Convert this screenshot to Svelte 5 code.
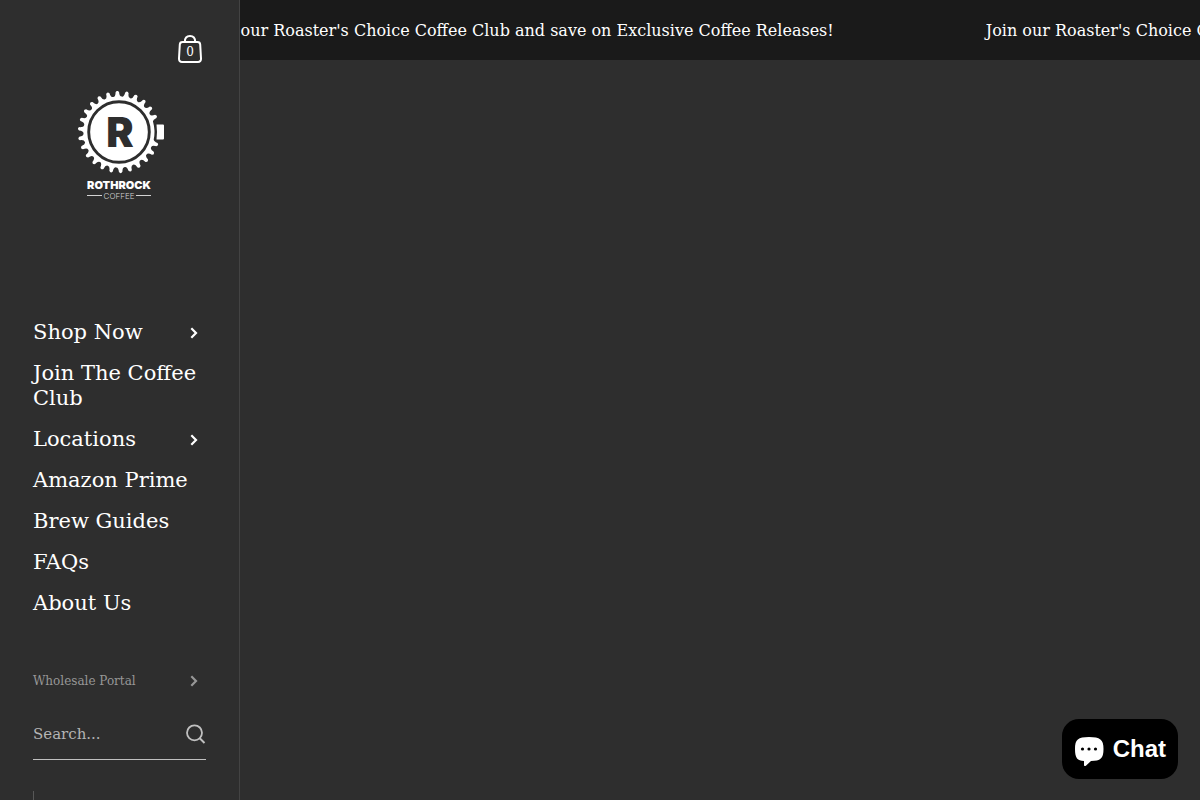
<script lang="ts">
  interface MenuItem {
    label: string;
    expandable?: boolean;
  }

  const announcement =
    "Join our Roaster's Choice Coffee Club and save on Exclusive Coffee Releases!";

  const menu: MenuItem[] = [
    { label: 'Shop Now', expandable: true },
    { label: 'Join The Coffee Club' },
    { label: 'Locations', expandable: true },
    { label: 'Amazon Prime' },
    { label: 'Brew Guides' },
    { label: 'FAQs' },
    { label: 'About Us' },
  ];

  let cartCount = $state(0);
  let query = $state('');
  let scrolled = $state(36);

  // sprocket outline, two teeth are left out for the mug handle
  const TEETH = 26;
  const STEP = 360 / TEETH;

  function point(radius: number, deg: number) {
    const rad = ((deg - 90) * Math.PI) / 180;
    return `${(42 + radius * Math.cos(rad)).toFixed(2)} ${(41 + radius * Math.sin(rad)).toFixed(2)}`;
  }

  function sprocket() {
    let d = `M${point(35.5, -2.4 - STEP / 2)}`;
    for (let i = 0; i < TEETH; i++) {
      const a = -2.4 + i * STEP;
      if (i === 6 || i === 7) {
        d += `A35.5 35.5 0 0 1 ${point(35.5, a + STEP / 2)}`;
        continue;
      }
      d += `Q${point(35.5, a - 3)} ${point(40, a - 2.5)}`;
      d += `Q${point(42.4, a)} ${point(40, a + 2.5)}`;
      d += `Q${point(35.5, a + 3)} ${point(35.5, a + STEP / 2)}`;
    }
    return d + 'Z';
  }
</script>

{#snippet chevron()}
  <svg class="chevron" viewBox="0 0 8 12" aria-hidden="true">
    <path d="M1.3 1.3 6 6 1.3 10.7" fill="none" stroke="currentColor" stroke-width="2.2" />
  </svg>
{/snippet}

<div class="page">
  <aside class="sidebar">
    <a class="cart" href="#cart" aria-label="Cart">
      <svg viewBox="0 0 24 28" aria-hidden="true">
        <g fill="none" stroke="currentColor" stroke-width="2">
          <path d="M4.5 7h15c1.6 0 2.6 1 2.7 2.5l.8 14c.1 2-1 3.5-3 3.5H4c-2 0-3.100-1.5-3-3.500l.8-14C1.900 8 2.900 7 4.500 7Z" />
          <path d="M6.800 7C6.800 3 8.500 1 12 1s5.200 2 5.200 6" />
        </g>
      </svg>
      <span class="cart-count">{cartCount}</span>
    </a>

    <a class="logo" href="#home" aria-label="Rothrock Coffee">
      <svg viewBox="0 0 88 110" aria-hidden="true">
        <path d={sprocket()} fill="#fff" />
        <circle cx="42" cy="41" r="30.3" fill="none" stroke="#2e2e2e" stroke-width="2.9" />
        <path d="M79.500 33.500h6.500q1 0 1 1v13q0 1-1 1h-6.500q1-7.500 0-15Z" fill="#fff" />
        <text class="logo-letter" x="43" y="56" text-anchor="middle">R</text>
        <text class="logo-name" x="42" y="98" text-anchor="middle">ROTHROCK</text>
        <text class="logo-sub" x="42" y="108" text-anchor="middle">COFFEE</text>
        <path d="M10 104.500h15M59 104.500h15" stroke="#fff" stroke-width="0.8" />
      </svg>
    </a>

    <nav class="menu" aria-label="Main">
      {#each menu as item}
        <a class="menu-link" href="#menu">
          <span>{item.label}</span>
          {#if item.expandable}
            {@render chevron()}
          {/if}
        </a>
      {/each}
    </nav>

    <a class="secondary-link" href="#wholesale">
      <span>Wholesale Portal</span>
      {@render chevron()}
    </a>

    <form class="search" role="search">
      <input type="search" aria-label="Search" placeholder="Search..." bind:value={query} />
      <button type="submit" aria-label="Submit search">
        <svg viewBox="0 0 20 20" aria-hidden="true">
          <circle cx="8.5" cy="8.8" r="7.500" fill="none" stroke="currentColor" stroke-width="1.8" />
          <path d="m13.500 14 5 5" stroke="currentColor" stroke-width="2" />
        </svg>
      </button>
    </form>

    <div class="social"></div>
  </aside>

  <main class="content">
    <div class="announcement">
      <div class="announcement-track" style="transform: translateX(-{scrolled}px);">
        <span>{announcement}</span>
        <span aria-hidden="true">{announcement}</span>
      </div>
    </div>
  </main>
</div>

<button class="chat" type="button">
  <svg viewBox="0 0 30 30" aria-hidden="true">
    <path
      d="M15 1C4 1 1 3.500 1 13s2.500 11.500 9 12v4c0 1.200 1 1.500 1.900.8L17 25c9.500 0 12.500-2.500 12.500-12S26 1 15 1Z"
      fill="#fff"
    />
    <circle cx="8.500" cy="13" r="1.6" />
    <circle cx="15" cy="13" r="1.6" />
    <circle cx="21.500" cy="13" r="1.6" />
  </svg>
  <span>Chat</span>
</button>

<style>
  :global(body) {
    background: #2e2e2e;
    color: #fff;
    font-family: 'DejaVu Serif', serif;
  }

  a {
    color: inherit;
    text-decoration: none;
  }

  svg {
    display: block;
  }

  .page {
    display: grid;
    grid-template-columns: 240px minmax(0, 1fr);
    height: 100vh;
  }

  .sidebar {
    display: flex;
    flex-direction: column;
    box-sizing: border-box;
    min-height: 0;
    padding: 35px 33px 0;
    border-right: 1px solid #434343;
    overflow: hidden;
  }

  .sidebar > * {
    flex-shrink: 0;
  }

  .cart {
    display: grid;
    align-self: flex-end;
    width: 24px;
    margin-right: 4px;
  }

  .cart svg,
  .cart-count {
    grid-area: 1 / 1;
  }

  .cart-count {
    padding-top: 7px;
    font-size: 12px;
    line-height: 20px;
    text-align: center;
  }

  .logo {
    align-self: center;
    width: 88px;
    margin-top: 28px;
    padding-left: 2px;
  }

  .logo-letter {
    fill: #2e2e2e;
    font-family: Inter, sans-serif;
    font-size: 41px;
    font-weight: 900;
  }

  .logo-name {
    fill: #fff;
    font-family: Inter, sans-serif;
    font-size: 11px;
    font-weight: 900;
  }

  .logo-sub {
    fill: #d0d0d0;
    font-family: Inter, sans-serif;
    font-size: 8px;
    font-weight: 300;
  }

  .menu {
    display: flex;
    flex-direction: column;
    gap: 16px;
    margin-top: 119px;
  }

  .menu-link,
  .secondary-link {
    display: flex;
    align-items: center;
    justify-content: space-between;
    padding-right: 8px;
  }

  .menu-link {
    font-size: 21px;
    line-height: 25px;
  }

  .chevron {
    flex-shrink: 0;
    width: 8px;
    height: 12px;
  }

  .secondary-link {
    margin-top: 55px;
    color: #979797;
    font-size: 12px;
    line-height: 20px;
  }

  .menu-link:not(:has(svg)) {
    padding-right: 0;
  }

  .search {
    display: flex;
    align-items: center;
    margin-top: 17px;
    height: 51px;
    border-bottom: 1px solid #c0c0c0;
    color: #c0c0c0;
  }

  .search input {
    flex: 1;
    min-width: 0;
    padding: 0;
    border: 0;
    outline: 0;
    background: none;
    color: inherit;
    font-family: inherit;
    font-size: 15px;
    line-height: 24px;
  }

  .search input::placeholder {
    color: #b4b4b4;
  }

  .search button {
    padding: 0;
    border: 0;
    background: none;
    color: inherit;
  }

  .search button svg {
    width: 20px;
  }

  .social {
    margin-top: 31px;
    height: 44px;
    border-left: 1px solid #585858;
  }

  .announcement {
    background: #1a1a1a;
    overflow: hidden;
  }

  .announcement-track {
    display: flex;
    gap: 152px;
    width: max-content;
    padding-top: 2px;
    font-size: 16px;
    line-height: 58px;
    white-space: nowrap;
  }

  .chat {
    position: fixed;
    right: 22px;
    bottom: 21px;
    display: flex;
    align-items: center;
    gap: 9px;
    height: 60px;
    padding: 0 12px;
    border: 0;
    border-radius: 17px;
    background: #000;
    color: #fff;
    font-family: 'Liberation Sans', Arial, sans-serif;
    font-size: 24px;
    font-weight: 700;
  }

  .chat svg {
    width: 30px;
    padding-top: 4px;
  }
</style>
